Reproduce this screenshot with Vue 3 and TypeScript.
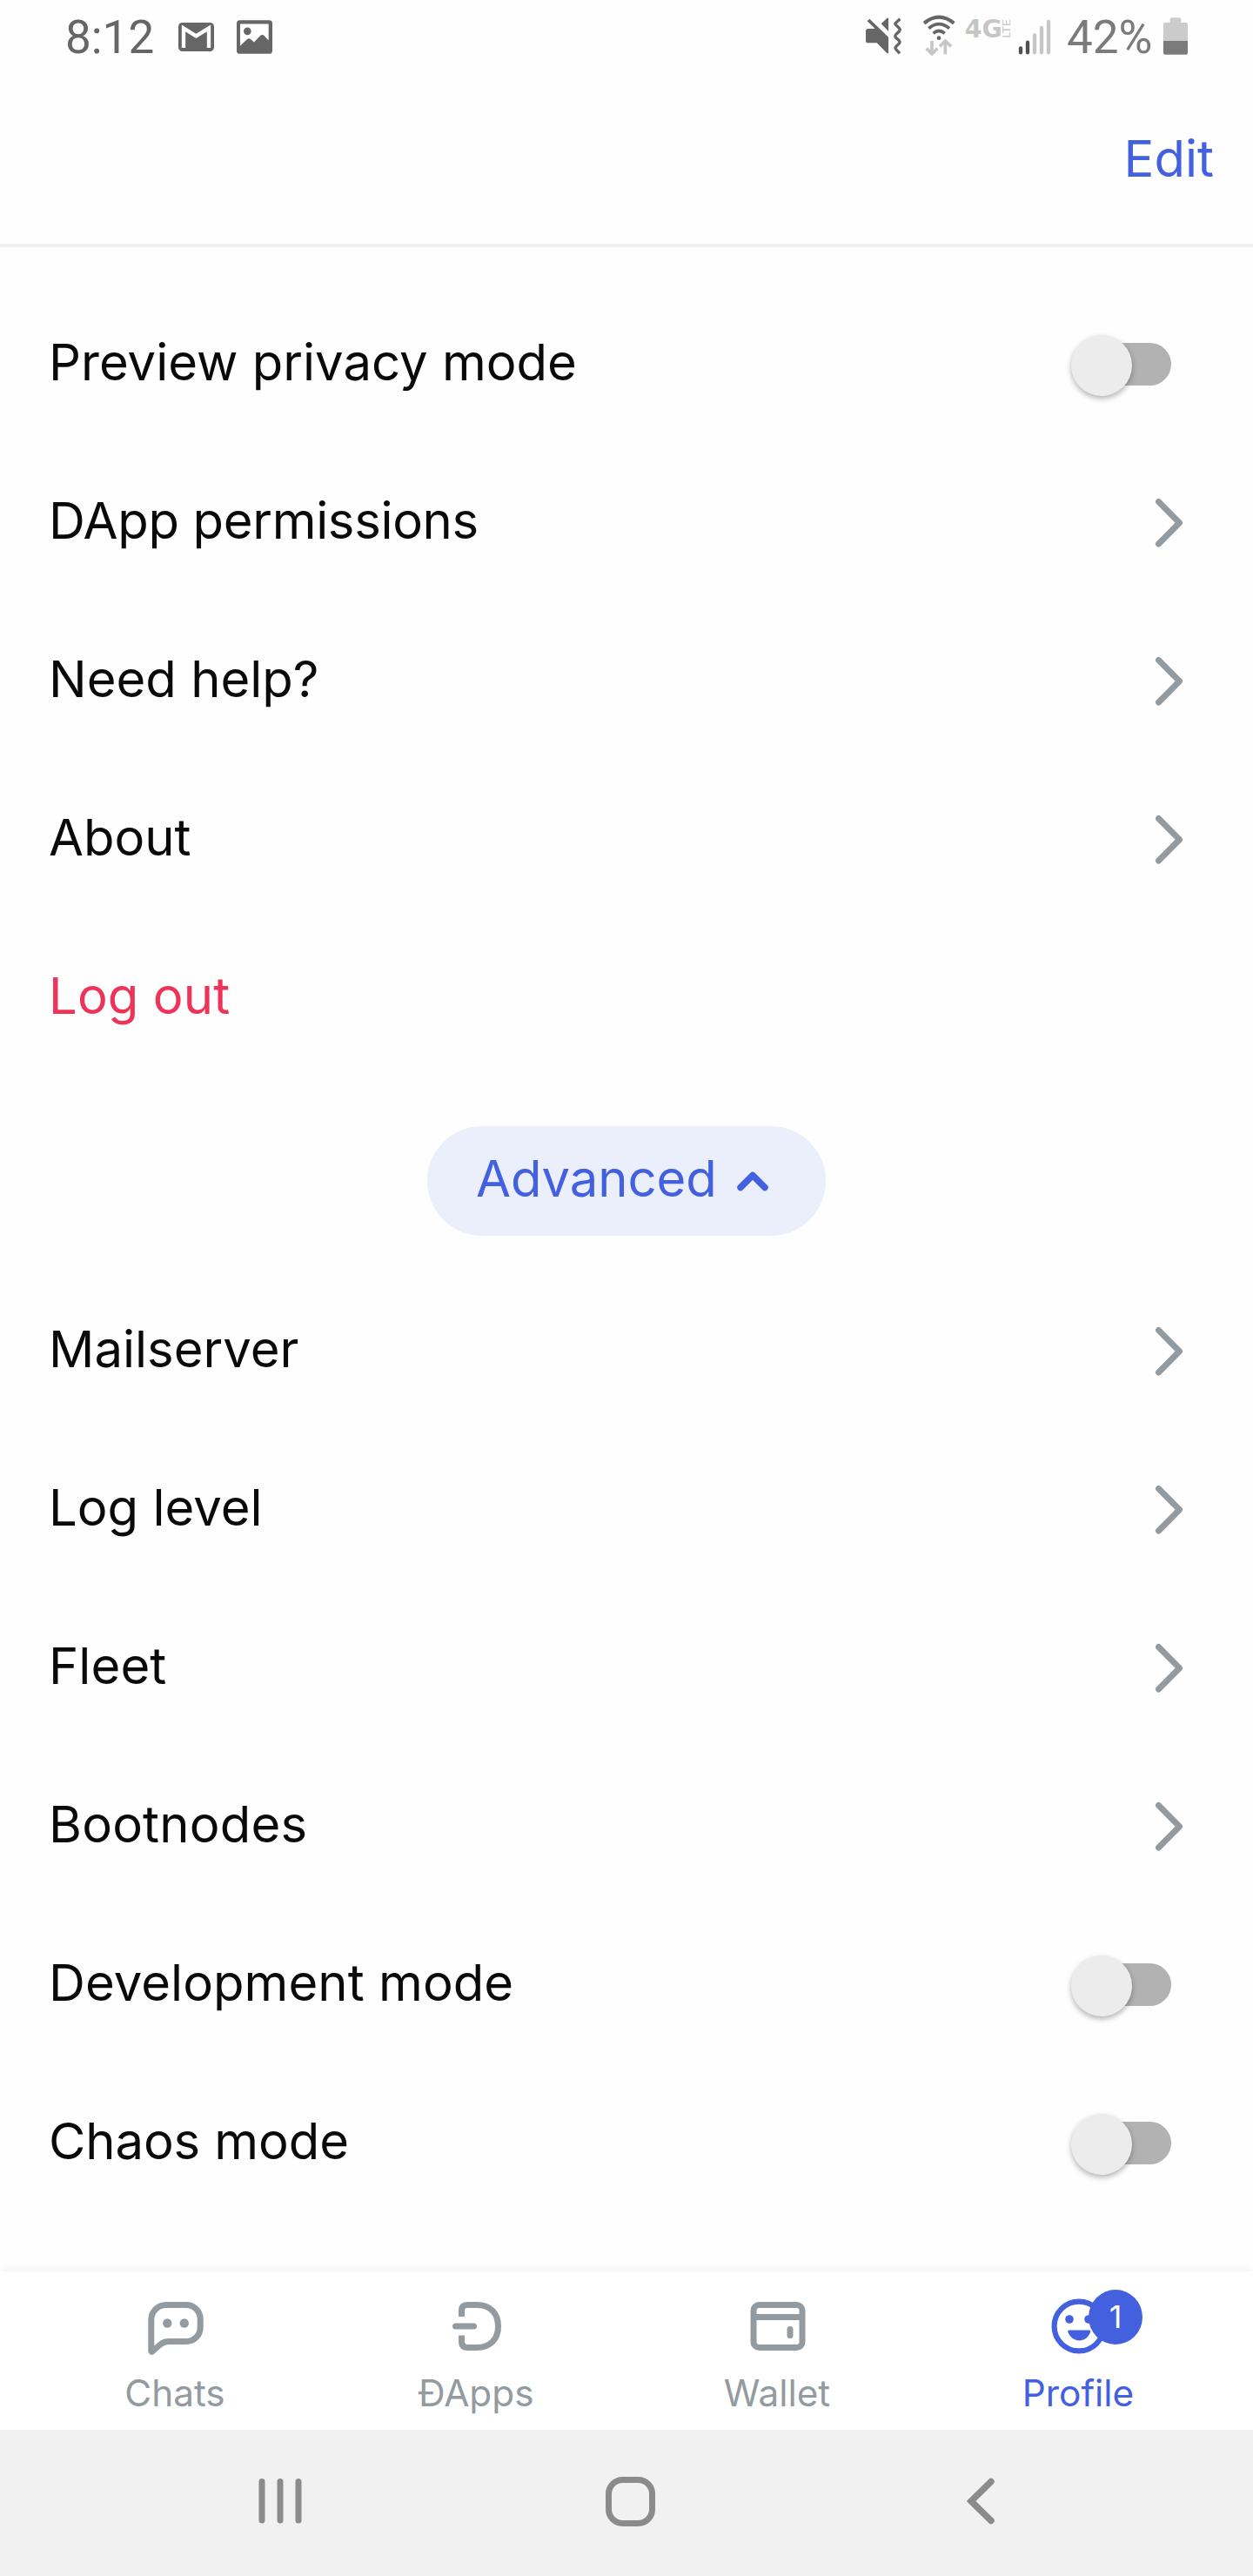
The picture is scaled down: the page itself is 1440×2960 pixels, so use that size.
<script setup lang="ts">
import { ref } from 'vue'

interface Row {
  label: string
  kind: 'toggle' | 'link' | 'action'
  // letter spacing in pixels
  tracking: number
}

const mainRows: Row[] = [
  { label: 'Preview privacy mode', kind: 'toggle', tracking: 0 },
  { label: 'DApp permissions', kind: 'link', tracking: -0.33 },
  { label: 'Need help?', kind: 'link', tracking: 0 },
  { label: 'About', kind: 'link', tracking: 0 },
  { label: 'Log out', kind: 'action', tracking: 0.1 },
]

const advancedRows: Row[] = [
  { label: 'Mailserver', kind: 'link', tracking: 0 },
  { label: 'Log level', kind: 'link', tracking: 0 },
  { label: 'Fleet', kind: 'link', tracking: 0.1 },
  { label: 'Bootnodes', kind: 'link', tracking: 0.2 },
  { label: 'Development mode', kind: 'toggle', tracking: 0.06 },
  { label: 'Chaos mode', kind: 'toggle', tracking: -0.1 },
]

const groups = [
  { id: 'main', rows: mainRows },
  { id: 'advanced', rows: advancedRows },
]

const tabs = ['Chats', 'ÐApps', 'Wallet', 'Profile']
const active = ref('Profile')
</script>

<template>
  <div class="screen">
    <div class="status">
      <span class="clock">8:12</span>
      <svg class="gmail" viewBox="495 78 123 99" width="41" height="33">
        <rect x="495" y="78" width="123" height="99" rx="14" fill="#666" />
        <path d="M513 165V97L556 124L600 97V165" fill="none" stroke="#fff" stroke-width="13" />
      </svg>
      <svg class="photo" viewBox="696 68 123 116" width="41" height="39">
        <rect x="696" y="68" width="123" height="116" rx="11" fill="#666" />
        <path d="M708 81H806V138L790 121Q784 116 778 121L756 144L743 133Q738 129 733 133L708 157Z" fill="#fff" />
        <circle cx="733" cy="106" r="13" fill="#666" />
      </svg>
      <span class="spacer"></span>
      <svg class="mute" viewBox="45 60 129 129" width="43" height="43">
        <path d="M56 99H80L53 73L61 65L126 128V184H122L86 148H56Q48 148 48 140V107Q48 99 56 99ZM126 62V107L101 82L120 64Q123 61 126 62Z" fill="#666" />
        <path d="M166 65L151 79Q148 82 152 86L163 97Q168 103 163 108L152 119Q147 124 152 130L163 140Q167 145 163 150L152 161Q148 166 152 170L165 184" fill="none" stroke="#666" stroke-width="10" />
      </svg>
      <svg class="wifi" viewBox="243 51 114 144" width="38" height="48">
        <g fill="none" stroke="#666">
          <path d="M249 80Q300 38 352 80" stroke-width="12" />
          <path d="M265 98Q300 68 336 98" stroke-width="11" />
          <path d="M281 115Q300 98 320 115" stroke-width="11" />
        </g>
        <circle cx="300" cy="131" r="7" fill="#666" />
        <g fill="none" stroke="#c6c6c6" stroke-width="11">
          <path d="M276 141V184M257 167L276 186L295 167" />
          <path d="M322 187V145M303 160L322 141L342 160" />
        </g>
      </svg>
      <svg class="lte" viewBox="390 30 162 129" width="54" height="43">
        <text x="389" y="129" textLength="129" lengthAdjust="spacingAndGlyphs" class="lte-big">4G</text>
        <text transform="translate(547 131) rotate(-90)" textLength="65" lengthAdjust="spacingAndGlyphs" class="lte-small">LTE</text>
      </svg>
      <svg class="signal" viewBox="573 66 114 123" width="38" height="41">
        <g stroke-width="13" stroke-linecap="round">
          <path d="M582 166V181M606 146V181" stroke="#505050" />
          <path d="M630 121V181M654 96V181M678 75V181" stroke="#c6c6c6" />
        </g>
      </svg>
      <span class="percent">42%</span>
      <svg class="battery" viewBox="1071 60 84 129" width="28" height="43">
        <path d="M1071 142V84Q1071 78 1077 78H1094V67Q1094 61 1100 61H1126Q1132 61 1132 67V78H1149Q1155 78 1155 84V142Z" fill="#cbcbcb" />
        <path d="M1071 141H1155V182Q1155 188 1149 188H1077Q1071 188 1071 182Z" fill="#7b7b7b" />
      </svg>
    </div>

    <header class="header"><span class="edit">Edit</span></header>

    <main class="content">
      <template v-for="group in groups" :key="group.id">
        <button v-if="group.id === 'advanced'" class="advanced">
          <span>Advanced</span>
          <svg viewBox="0 0 56 56" width="56" height="56">
            <path d="M14 35.5L28 21.5L42 35.5" fill="none" stroke="#4360df" stroke-width="7.5" stroke-linecap="round" stroke-linejoin="round" />
          </svg>
        </button>
        <div v-for="row in group.rows" :key="row.label" class="row" :class="row.kind">
          <span class="label" :style="{ letterSpacing: row.tracking + 'px' }">{{ row.label }}</span>
          <svg v-if="row.kind === 'link'" class="chevron" viewBox="0 0 84 84" width="84" height="84">
            <path d="M31.5 18.5L55.5 42.7L31.5 67" fill="none" stroke="#939ba1" stroke-width="7" stroke-linecap="round" stroke-linejoin="round" />
          </svg>
          <span v-else-if="row.kind === 'toggle'" class="switch"><span class="knob"></span></span>
        </div>
      </template>
    </main>

    <nav class="tabs">
      <div v-for="tab in tabs" :key="tab" class="tab" :class="{ active: tab === active }">
        <div class="icon">
          <svg v-if="tab === 'Chats'" viewBox="0 0 84 84" width="84" height="84" fill="none" stroke="currentColor" stroke-width="7">
            <path d="M14.8 71V34.5A17 17 0 0 1 31.8 17.500H55A16.200 16.200 0 0 1 71.200 33.700V43.500A16 16 0 0 1 55.200 59.500H35Q29 59.500 24 64L15.500 71.500Z" stroke-linejoin="round" />
            <g fill="currentColor" stroke="none"><circle cx="33.300" cy="38.500" r="5.200" /><circle cx="52.800" cy="38.500" r="5.200" /></g>
          </svg>
          <svg v-else-if="tab === 'ÐApps'" viewBox="0 0 84 84" width="84" height="84" fill="none" stroke="currentColor" stroke-width="7">
            <path d="M25.500 31V24Q25.500 17.500 32 17.500H43C59 17.500 67.500 27.500 67.500 42S59 66.500 43 66.500H32Q25.500 66.500 25.500 59V52.500" />
            <path d="M18.500 42H39.500" stroke-linecap="round" />
          </svg>
          <svg v-else-if="tab === 'Wallet'" viewBox="0 0 84 84" width="84" height="84" fill="none" stroke="currentColor" stroke-width="7">
            <rect x="15" y="17.500" width="56" height="49" rx="6.500" />
            <path d="M15 31.500H70.500" />
            <path d="M57 45.500V52.500" stroke-linecap="round" />
          </svg>
          <svg v-else viewBox="0 0 84 84" width="84" height="84">
            <circle cx="43" cy="42" r="28.400" fill="none" stroke="currentColor" stroke-width="6.200" />
            <g fill="currentColor">
              <circle cx="32" cy="34" r="4.800" /><circle cx="54" cy="34" r="4.800" />
              <path d="M32 46.500H54.500Q57 46.500 56 49C53.500 55 49 58.500 43.500 58.500S33 55 30.500 49Q29.500 46.500 32 46.500Z" />
            </g>
          </svg>
          <span v-if="tab === 'Profile'" class="badge">1</span>
        </div>
        <span class="tab-label">{{ tab }}</span>
      </div>
    </nav>

    <div class="system">
      <svg viewBox="0 0 50 54" width="50" height="54"><path d="M4 4.500V49M25 4.500V49M46 4.500V49" stroke="#8b8b8b" stroke-width="7" stroke-linecap="round" /></svg>
      <svg class="home" viewBox="0 0 57 57" width="57" height="57"><rect x="3.500" y="3.500" width="50" height="50" rx="16" fill="none" stroke="#8b8b8b" stroke-width="7" /></svg>
      <svg viewBox="0 0 32 54" width="32" height="54"><path d="M28 4.500L5 27L28 49.500" fill="none" stroke="#8b8b8b" stroke-width="7.500" stroke-linecap="round" /></svg>
    </div>
  </div>
</template>

<style>
body {
  margin: 0;
  background: #fefefe;
}
</style>

<style scoped>
.screen {
  width: 1440px;
  height: 2960px;
  display: flex;
  flex-direction: column;
  background: #fefefe;
  color: #090909;
  font-family: Inter, "Liberation Sans", sans-serif;
  font-size: 58px;
  overflow: hidden;
}
svg {
  display: block;
  flex: none;
}
.status {
  height: 84px;
  flex: none;
  display: flex;
  align-items: flex-start;
  padding: 0 75px 0 75px;
  font-family: Roboto, sans-serif;
  font-size: 53px;
  line-height: 62px;
  color: #666;
}
.clock {
  width: 130px;
  padding-top: 12px;
}
.gmail {
  margin-top: 26px;
}
.photo {
  margin: 22.500px 0 0 26px;
}
.spacer {
  flex: 1;
}
.mute {
  margin-top: 20px;
}
.wifi {
  margin: 17px 0 0 23px;
}
.lte {
  margin: 10px 0 0 11px;
  overflow: visible;
}
.lte-big {
  font: bold 86px "DejaVu Sans", sans-serif;
  fill: #c6c6c6;
}
.lte-small {
  font: 36px "DejaVu Sans", sans-serif;
  fill: #c6c6c6;
}
.signal {
  margin: 22px 0 0 7px;
}
.percent {
  width: 111px;
  margin-left: 18px;
  padding-top: 12px;
  color: #7b7b7b;
}
.battery {
  margin-top: 20px;
}
.header {
  height: 196px;
  flex: none;
  border-bottom: 4px solid #f0f0f0;
  display: flex;
  justify-content: flex-end;
  padding-right: 45px;
}
.edit {
  line-height: 70px;
  margin-top: 63px;
  color: #4360df;
}
.content {
  flex: 1;
  display: flex;
  flex-direction: column;
  padding-top: 43px;
}
.row {
  height: 182px;
  flex: none;
  display: flex;
  align-items: center;
  justify-content: space-between;
  padding: 0 56px;
}
.label {
  line-height: 70px;
  padding-bottom: 4px;
}
.action {
  color: #ee3359;
}
.switch {
  position: relative;
  width: 94px;
  height: 49px;
  margin: 0 38px 0 0;
  border-radius: 25px;
  background: #b2b2b2;
}
.knob {
  position: absolute;
  left: -21px;
  top: -9px;
  width: 70px;
  height: 70px;
  border-radius: 50%;
  background: #ececec;
  box-shadow: 0 3px 6px rgba(0, 0, 0, 0.3);
}
.advanced {
  width: 458px;
  height: 126px;
  margin: 57px auto 41px;
  flex: none;
  display: flex;
  align-items: center;
  padding: 0 0 0 56px;
  border: 0;
  border-radius: 63px;
  background: #ebeefb;
  color: #4360df;
  font: inherit;
}
.advanced span {
  width: 290px;
  text-align: left;
  line-height: 70px;
  padding-bottom: 6px;
  letter-spacing: -0.1px;
}
.tabs {
  height: 182px;
  flex: none;
  display: flex;
  padding: 0 28px;
  background: #fff;
  box-shadow: 0 -2px 8px rgba(0, 0, 0, 0.06);
  color: #939ba1;
}
.tab {
  flex: 1;
  display: flex;
  flex-direction: column;
  align-items: center;
  padding-top: 21px;
}
.active {
  color: #4360df;
}
.icon {
  position: relative;
}
.badge {
  position: absolute;
  left: 54px;
  top: 0;
  width: 62px;
  height: 63px;
  border-radius: 50%;
  background: #4360df;
  color: #fff;
  font-size: 36px;
  line-height: 62px;
  text-align: center;
}
.tab-label {
  font-size: 42.300px;
  line-height: 52px;
  margin-top: 9px;
}
.system {
  height: 168px;
  flex: none;
  background: #f1f1f1;
  display: flex;
  align-items: center;
  justify-content: space-between;
  padding: 0 297px;
  box-sizing: border-box;
  padding-bottom: 4px;
}
.home {
  margin-right: 9px;
}
</style>
